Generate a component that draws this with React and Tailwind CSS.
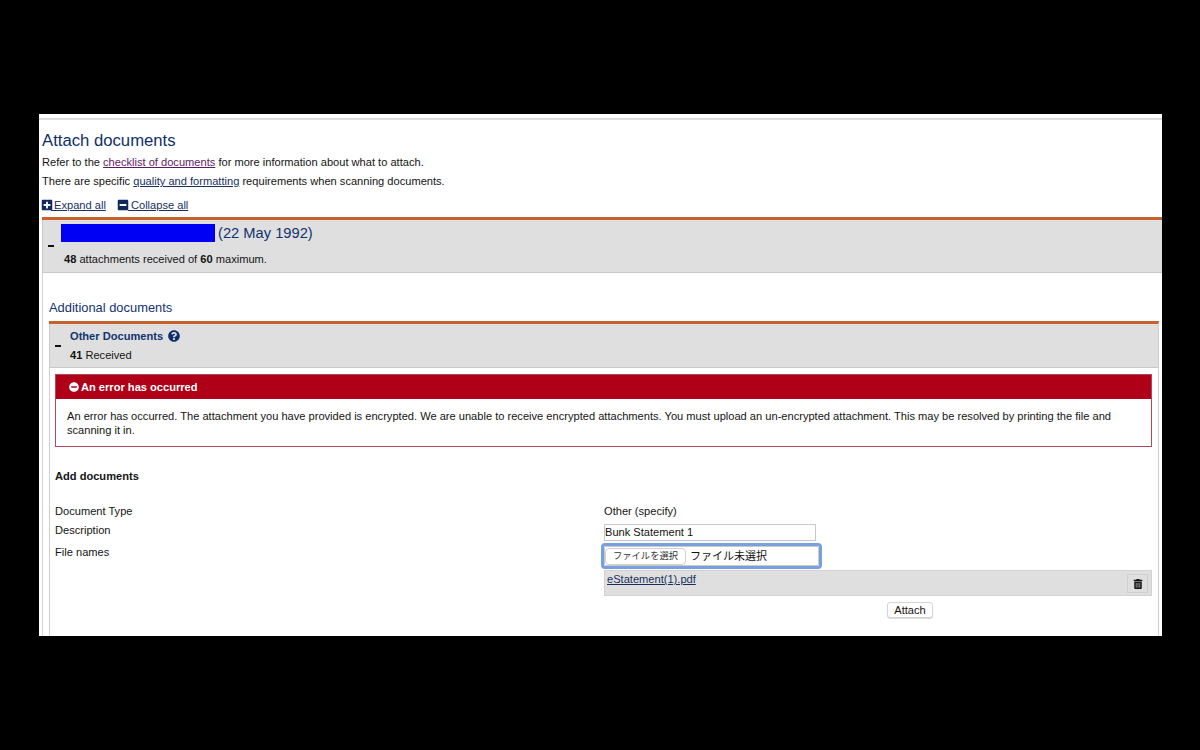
import React from "react";
import { FaPlusSquare, FaMinusSquare, FaQuestionCircle, FaMinusCircle, FaTrashAlt } from "react-icons/fa";

const font = { fontFamily: '"Liberation Sans", "Noto Sans CJK JP", sans-serif' };

function FormRow({ label, children, className, labelClass = "" }) {
  return (
    <div className={"flex " + className}>
      <div className={"w-[549px] shrink-0 " + labelClass}>{label}</div>
      <div className="flex-1">{children}</div>
    </div>
  );
}

export default function App() {
  return (
    <div className="h-[750px] bg-black pt-[114px] pl-[39px] overflow-hidden" style={font}>
      <div className="w-[1123px] h-[522px] bg-white overflow-hidden text-[11.1px] leading-[14px] text-[#141414]">
        <div className="mt-[4px] h-[2px] bg-[#dddddd]" />
        <div className="pl-[3px]">
          <h1 className="mt-[10px] text-[16.7px] leading-[22px] text-[#0f2f6b]">Attach documents</h1>
          <p className="mt-[3px]">
            Refer to the <a className="underline text-[#5f1a66]">checklist of documents</a> for more information about what to attach.
          </p>
          <p className="mt-[5px]">
            There are specific <a className="underline text-[#17305f]">quality and formatting</a> requirements when scanning documents.
          </p>
          <div className="mt-[10px] flex items-center h-[14px] text-[#17305f]">
            <FaPlusSquare className="-ml-[1px] text-[12px] text-[#0f2a5c]" />
            <a className="-ml-[2px] underline whitespace-pre"> Expand all</a>
            <FaMinusSquare className="ml-[11px] text-[12px] text-[#0f2a5c]" />
            <a className="-ml-[1px] underline whitespace-pre"> Collapse all</a>
          </div>

          <div className="mt-[5px] border-t-[3px] border-[#c8622c]">
            <div className="relative h-[53px] bg-[#dfdfdf] border-b border-[#c9c9c9] border-l border-l-[#c9c9c9]">
              <div className="pl-[18px] pt-[3px] flex items-center">
                <div className="w-[154px] h-[18px] bg-[#0000f5]" />
                <span className="ml-[3px] pt-[1px] text-[14.7px] leading-[18px] text-[#12336f]">(22 May 1992)</span>
              </div>
              <span className="absolute left-[5px] top-[25px] w-[6px] h-[2px] bg-[#111]" />
              <p className="ml-[21px] mt-[10px]">
                <b>48</b> attachments received of <b>60</b> maximum.
              </p>
            </div>
          </div>

          <div className="border-l border-[#d5d5d5] pl-[6px] pt-[27px] h-[364px]">
            <h2 className="text-[12.9px] leading-[16px] text-[#12336f]">Additional documents</h2>
            <div className="mt-[5px] mr-[3px] border-t-[3px] border-[#c8622c] h-[400px] border-r border-r-[#cfcfcf]">
              <div className="relative h-[44px] bg-[#dfdfdf] border-b border-[#c9c9c9] border-l border-l-[#c9c9c9] pl-[20px] pt-[5px]">
                <div className="flex items-center h-[14px]">
                  <b className="text-[#12336f]">Other Documents</b>
                  <FaQuestionCircle className="ml-[5px] text-[12px] text-[#0f2f6b]" />
                </div>
                <p className="mt-[5px]"><b>41</b> Received</p>
                <span className="absolute left-[5px] top-[21px] w-[6px] h-[2px] bg-[#111]" />
              </div>
              <div className="h-[350px] border-l border-[#cfcfcf] pl-[5px] pr-[6px] pt-[6px]">
                <div className="border border-[#b0485a]">
                  <div className="h-[24px] pb-[1px] bg-[#b00018] text-white font-bold flex items-center pl-[13px]">
                    <FaMinusCircle className="text-[10px] mr-[2px]" />
                    An error has occurred
                  </div>
                  <p className="px-[11px] pt-[10px] pb-[9px]">
                    An error has occurred. The attachment you have provided is encrypted. We are unable to receive encrypted attachments. You must upload an un-encrypted attachment. This may be resolved by printing the file and scanning it in.
                  </p>
                </div>
                <h3 className="mt-[22px] font-bold">Add documents</h3>
                <FormRow label="Document Type" className="mt-[21px] h-[14px]">Other (specify)</FormRow>
                <FormRow label="Description" className="mt-[5px]">
                  <div className="w-[212px] h-[17px] border border-[#c9c9c9] leading-[15px] mt-[1px]">Bunk Statement 1</div>
                </FormRow>
                <FormRow label="File names" className="mt-[2px]" labelClass="pt-[2px]">
                  <div className="-ml-[3px] w-[221px] h-[26px] border-[3px] border-[#76a0e0] rounded-[4px] flex items-center bg-white outline outline-[#c9c9c9] -outline-offset-4">
                    <span className="ml-[1px] w-[81px] h-[17px] rounded-[4px] border border-[#d0d0d0] bg-white flex items-center justify-center text-[9.3px] text-[#333]">ファイルを選択</span>
                    <span className="ml-[4px] text-[11px] text-[#111]">ファイル未選択</span>
                  </div>
                  <div className="mt-[1px] h-[26px] bg-[#dfdfdf] border border-[#d2d2d2] flex justify-between pl-[2px] pr-[3px]">
                    <a className="underline text-[#17305f] mt-[1px]">eStatement(1).pdf</a>
                    <span className="mt-[3px] w-[21px] h-[19px] border border-[#cfcfcf] flex items-center justify-center">
                      <FaTrashAlt className="text-[10px] text-[#111]" />
                    </span>
                  </div>
                  <div className="mt-[6px] pl-[283px]">
                    <button className="w-[46px] h-[16px] rounded-[3px] border border-[#d5d5d5] bg-white text-[11.1px] leading-[14px] shadow-[0_1px_0_#ddd]">Attach</button>
                  </div>
                </FormRow>
              </div>
            </div>
          </div>
        </div>
      </div>
    </div>
  );
}
